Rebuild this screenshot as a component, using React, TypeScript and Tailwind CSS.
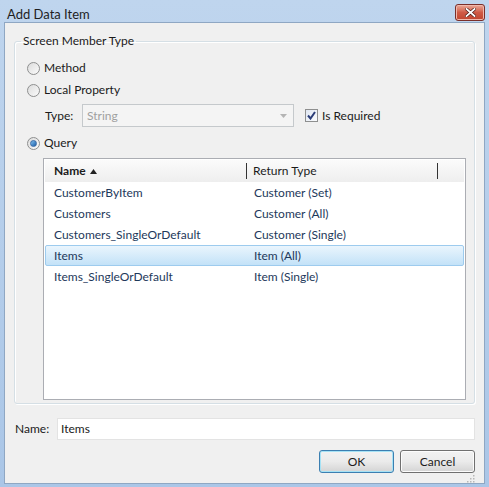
import type { ReactNode } from "react";

const rows = [
  { name: "CustomerByItem", type: "Customer (Set)" },
  { name: "Customers", type: "Customer (All)" },
  { name: "Customers_SingleOrDefault", type: "Customer (Single)" },
  { name: "Items", type: "Item (All)", selected: true },
  { name: "Items_SingleOrDefault", type: "Item (Single)" },
];

function Radio({ checked, label }: { checked?: boolean; label: string }) {
  return (
    <div className="flex h-[22px] items-center gap-[4px] pl-[12px]">
      <div className="flex h-[13px] w-[13px] items-center justify-center rounded-full border border-[#8e8f8f] bg-gradient-to-br from-[#dcdcdc] to-[#fbfbfb]">
        {checked && (
          <div className="h-[7px] w-[7px] rounded-full border border-[#3a6aa6] bg-gradient-to-br from-[#7fc0f0] to-[#1b5fa8]" />
        )}
      </div>
      <span className="text-[#1b1b1b]">{label}</span>
    </div>
  );
}

function Button({ children, primary }: { children: ReactNode; primary?: boolean }) {
  return (
    <button
      className={
        "h-[23px] w-[75px] rounded-[3px] border bg-gradient-to-b from-[#f2f2f2] via-[#ebebeb] to-[#d4d4d4] text-[#1b1b1b] " +
        (primary
          ? "border-[#3c7fb1] shadow-[inset_0_0_0_1px_#a6e2f5]"
          : "border-[#707070] shadow-[inset_0_0_0_1px_#fcfcfc]")
      }
    >
      {children}
    </button>
  );
}

export default function App() {
  return (
    <div
      className="flex h-[487px] w-[489px] flex-col bg-gradient-to-b from-[#bfd5ee] to-[#aac6e7] text-[12px] leading-[16px]"
      style={{ fontFamily: 'Lato, "Noto Sans", sans-serif' }}
    >
      {/* title bar */}
      <div className="flex h-[25px] items-start justify-between pl-[7px] pr-[4px]">
        <span className="mt-[6px] text-[13px] text-[#1e1e1e]">Add Data Item</span>
        <div className="mt-[4px] flex h-[17px] w-[30px] items-center justify-center rounded-[3px] border border-[#7a2f2a] bg-gradient-to-b from-[#e9a99a] via-[#cf5a45] to-[#c0452f] shadow-[inset_0_0_0_1px_#f0b9ad]">
          <svg width="11" height="9" viewBox="0 0 11 9">
            <path d="M1.5 1 L9.5 8 M9.5 1 L1.5 8" stroke="#4a1a14" strokeWidth="3.2" strokeLinecap="square" />
            <path d="M1.5 1 L9.5 8 M9.5 1 L1.5 8" stroke="#ffffff" strokeWidth="1.8" strokeLinecap="square" />
          </svg>
        </div>
      </div>

      {/* client area */}
      <div className="mx-[4px] mb-[3px] flex flex-1 flex-col border border-[#8fa7c3] bg-[#f0f0f0] px-[9px] pt-[10px]">
        <fieldset className="h-[371px] rounded-[3px] border border-[#d5dfe5] shadow-[inset_1px_1px_0_#fff,1px_1px_0_#fff]">
          <legend className="ml-[6px] px-[2px] text-[#1b1b1b]">Screen Member Type</legend>
          <div className="pt-[8px]">
            <Radio label="Method" />
            <Radio label="Local Property" />
            <div className="mt-[2px] flex h-[25px] items-center pl-[30px]">
              <span className="w-[37px] text-[#1b1b1b]">Type:</span>
              <div className="flex h-[23px] w-[212px] items-center justify-between border border-[#c5c9cc] bg-[#f4f4f4] pl-[4px] pr-[6px]">
                <span className="text-[#a0a0a0]">String</span>
                <svg width="7" height="4" viewBox="0 0 7 4">
                  <path d="M0 0 L7 0 L3.5 4 Z" fill="#b4b4b4" />
                </svg>
              </div>
              <div className="ml-[11px] flex h-[13px] w-[13px] items-center justify-center border border-[#8e8f8f] bg-gradient-to-br from-[#dfe6f2] to-[#fafbfd]">
                <svg width="9" height="9" viewBox="0 0 9 9">
                  <path d="M1 4.5 L3.5 7.5 L8 1" stroke="#2a3c78" strokeWidth="2" fill="none" />
                </svg>
              </div>
              <span className="ml-[4px] text-[#1b1b1b]">Is Required</span>
            </div>
            <div className="mt-[4px]">
              <Radio checked label="Query" />
            </div>

            {/* list */}
            <div className="ml-[28px] mr-[8px] mt-[4px] h-[242px] border border-[#abadb3] bg-white p-[1px]">
              <div className="flex h-[22px] items-center bg-gradient-to-b from-[#fbfbfb] to-[#eeeeee] pr-[3px]">
                <div className="flex w-[202px] items-center gap-[4px] border-r border-[#333] pl-[9px] font-bold text-[#1b1b1b]">
                  Name
                  <svg width="7" height="5" viewBox="0 0 7 5">
                    <path d="M0 5 L3.5 0 L7 5 Z" fill="#222" />
                  </svg>
                </div>
                <div className="w-[191px] border-r border-[#333] pl-[6px] text-[#1b1b1b]">Return Type</div>
              </div>
              {rows.map((r) => (
                <div
                  key={r.name}
                  className={
                    "flex h-[21px] items-center rounded-[2px] text-[#1e395b] " +
                    (r.selected
                      ? "border border-[#9dcbee] bg-gradient-to-b from-[#eaf5fd] to-[#c3e2f8]"
                      : "border border-transparent")
                  }
                >
                  <div className="w-[202px] pl-[8px]">{r.name}</div>
                  <div className="pl-[6px]">{r.type}</div>
                </div>
              ))}
            </div>
          </div>
        </fieldset>

        <div className="mt-[13px] flex h-[23px] items-center">
          <span className="w-[43px] pl-[1px] text-[#1b1b1b]">Name:</span>
          <div className="flex h-[22px] flex-1 items-center border border-[#e3e3e3] bg-white pl-[3px] text-[#1b1b1b]">
            Items
          </div>
        </div>

        <div className="mt-[10px] flex justify-end gap-[6px]">
          <Button primary>OK</Button>
          <Button>Cancel</Button>
        </div>
        <div className="flex justify-end">
          <svg width="10" height="10" viewBox="0 0 10 10">
            {[
              [8, 2],
              [8, 5],
              [5, 5],
              [8, 8],
              [5, 8],
              [2, 8],
            ].map(([x, y]) => (
              <rect key={`${x}-${y}`} x={x} y={y} width="1.5" height="1.5" fill="#b8b8b8" />
            ))}
          </svg>
        </div>
      </div>
    </div>
  );
}
